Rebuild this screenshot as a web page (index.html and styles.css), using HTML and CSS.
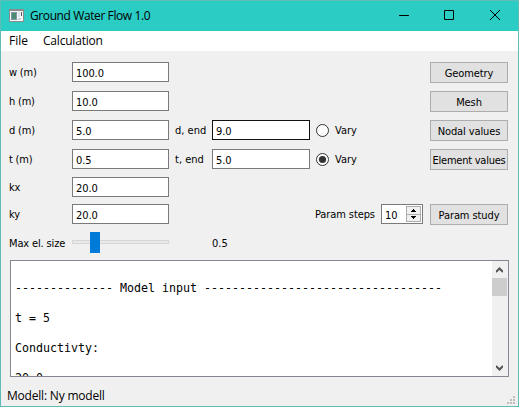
FILE: index.html
```html
<!DOCTYPE html>
<html lang="en">
<head>
<meta charset="utf-8">
<title>Ground Water Flow 1.0</title>
<link rel="stylesheet" href="styles.css">
</head>
<body>
<div class="window">
  <header class="titlebar">
    <svg class="appicon" width="15" height="13" viewBox="0 0 15 13"><path fill="#8e8a8c" d="M0 0h15v13H0z"/><path fill="#f4f6f6" d="M1 2h13v10H1z"/><path fill="#7d97a5" d="M2 3h6v8H2z"/><path fill="#4d8c72" d="M3 4h4v6H3z"/><path fill="#cfd3d5" d="M9 9h3v2H9z"/><path fill="#dde2e4" d="M9 3h2v5H9z"/><path fill="#556" d="M12 3h1v4h-1z"/></svg>
    <span class="title">Ground Water Flow 1.0</span>
    <svg class="controls" width="102" height="10" viewBox="0 0 102 10" fill="none" stroke="#000"><path d="M0 5.5h10M45.5.5h9v9h-9z"/><path d="M91 0l10 10M101 0L91 10"/></svg>
  </header>
  <nav class="menu"><span class="file">File</span><span class="calc">Calculation</span></nav>
  <main class="form">
    <label>w (m)</label><div class="field">100.0</div><div class="button">Geometry</div>
    <label>h (m)</label><div class="field">10.0</div><div class="button">Mesh</div>
    <label>d (m)</label><div class="field">5.0</div><label class="end">d, end</label><div class="field second hover">9.0</div>
    <div class="vary"><svg width="13" height="13" viewBox="0 0 13 13"><circle cx="6.5" cy="6.5" r="6" fill="#fff" stroke="#333"/></svg><span>Vary</span></div><div class="button">Nodal values</div>
    <label>t (m)</label><div class="field">0.5</div><label class="end">t, end</label><div class="field second">5.0</div>
    <div class="vary"><svg width="13" height="13" viewBox="0 0 13 13"><circle cx="6.5" cy="6.5" r="6" fill="#fff" stroke="#333"/><circle cx="6.5" cy="6.5" r="3.6" fill="#333"/></svg><span>Vary</span></div><div class="button tight">Element values</div>
    <label>kx</label><div class="field">20.0</div>
    <label>ky</label><div class="field">20.0</div>
    <div class="steps"><span>Param steps</span><div class="spin"><span>10</span><div class="arrows"><i><svg width="5" height="3" viewBox="0 0 5 3"><path d="M2 0h1v1h1v1h1v1H0V2h1V1h1z"/></svg></i><i><svg width="5" height="3" viewBox="0 0 5 3"><path d="M0 0h5v1H4v1H3v1H2V2H1V1H0z"/></svg></i></div></div></div>
    <div class="button">Param study</div>
    <label class="max">Max el. size</label><div class="slider"><div class="groove"></div><div class="handle"></div></div><span class="value">0.5</span>
  </main>
  <section class="output">
<pre class="log">
-------------- Model input ----------------------------------

t = 5

Conductivty:

20.0</pre>
    <div class="scrollbar"><svg width="7" height="6" viewBox="0 0 7 6"><path d="M0 5L3.5 1.5 7 5" fill="none" stroke="#555" stroke-width="2"/></svg><div class="thumb"></div><svg class="down" width="7" height="6" viewBox="0 0 7 6"><path d="M0 1L3.5 4.5 7 1" fill="none" stroke="#555" stroke-width="2"/></svg></div>
  </section>
  <footer class="status"><span>Modell: Ny modell</span><svg width="8" height="8" viewBox="0 0 8 8" fill="#bdbdbd"><path d="M6 0h2v2H6zM3 3h2v2H3zM6 3h2v2H6zM0 6h2v2H0zM3 6h2v2H3zM6 6h2v2H6z"/></svg></footer>
</div>
</body>
</html>
```
FILE: styles.css
```css
* { box-sizing: border-box; }
body { margin: 0; overflow: hidden; }
svg { display: block; flex: none; }
.window { width: 519px; height: 407px; border: 1px solid #5fbdb8; background: #f0f0f0; color: #000; display: flex; flex-direction: column; font: 11px/14px "DejaVu Sans Condensed", "DejaVu Sans", sans-serif; font-stretch: condensed; white-space: nowrap; }
.titlebar { height: 30px; background: #2accc4; display: flex; align-items: center; padding: 0 17px 0 8px; font: 12px/16px "Open Sans", sans-serif; }
.appicon { margin-top: -2px; }
.title { margin-left: 6px; letter-spacing: -0.4px; }
.controls { margin-left: auto; margin-top: -2px; }
.menu { height: 20px; background: #fff; display: flex; padding-left: 8px; font: 12px/20px "Open Sans", sans-serif; }
.file { width: 34px; }
.calc { letter-spacing: -0.2px; }
.form { height: 209px; padding: 11px 9px 0 8px; display: grid; grid-template-columns: 63px 97px 43px 98px 6px 46px 68px 78px; grid-template-rows: 29px 29px 29px 28px 27px 28px 22px; align-items: start; }
.form label { grid-column: 1; line-height: 22px; letter-spacing: -0.2px; }
.form label.end { grid-column: 3; padding-left: 6px; letter-spacing: 0; }
.form label.max { letter-spacing: -0.15px; line-height: 23px; }
.form .value { grid-column: 4; line-height: 23px; }
.field { grid-column: 2; height: 20px; border: 1px solid #7a7a7a; background: #fff; padding-left: 3px; line-height: 21px; letter-spacing: -0.1px; }
.second { grid-column: 4; }
.hover { border-color: #111; }
.button { grid-column: 8; height: 21px; border: 1px solid #adadad; background: #e1e1e1; line-height: 21px; text-align: center; letter-spacing: -0.1px; }
.tight { letter-spacing: -0.25px; }
.vary { grid-column: 6; display: flex; align-items: center; gap: 6px; height: 21px; line-height: 15px; }
.steps { grid-column: 6 / 8; display: flex; justify-content: space-between; padding-right: 7px; margin-left: -1px; line-height: 22px; letter-spacing: -0.1px; }
.spin { width: 42px; height: 20px; border: 1px solid #7a7a7a; background: #fff; display: flex; justify-content: space-between; padding: 1px 1px 1px 3px; line-height: 19px; }
.arrows { width: 15px; height: 16px; border: 1px solid #adadad; background: #f0f0f0; display: flex; flex-direction: column; }
.arrows i { flex: 1; display: flex; align-items: center; justify-content: center; }
.arrows i + i { border-top: 1px solid #adadad; }
.slider { grid-column: 2; height: 21px; position: relative; padding-top: 8px; }
.groove { height: 4px; border: 1px solid #d6d6d6; background: #e7eaea; }
.handle { position: absolute; left: 18px; top: 0; width: 10px; height: 21px; background: #007ad9; }
.output { height: 117px; margin: 0 9px; border: 1px solid #828790; background: #fff; display: flex; overflow: hidden; }
.log { flex: 1; margin: 0; padding: 20px 0 0 4px; font: 11.63px/15px "DejaVu Sans Mono", monospace; overflow: hidden; }
.scrollbar { width: 16px; padding: 6px 1px 5px 0; background: #f0f0f0; display: flex; flex-direction: column; align-items: center; }
.thumb { width: 15px; height: 18px; margin-top: 5px; background: #cdcdcd; }
.down { margin-top: auto; }
.status { flex: 1; display: flex; justify-content: space-between; align-items: flex-end; padding: 0 3px 2px 6px; font: 12px/17px "Open Sans", sans-serif; letter-spacing: -0.2px; }
```
